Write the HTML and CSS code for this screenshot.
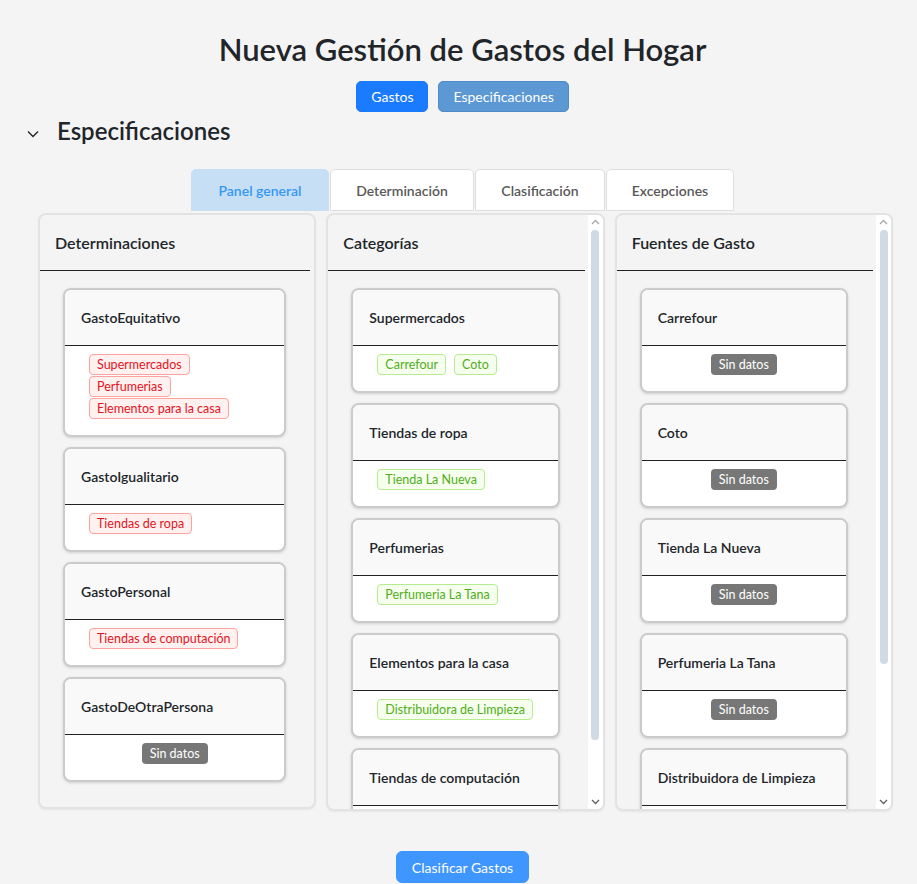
FILE: index.html
```html
<!DOCTYPE html>
<html lang="es">
<head>
<meta charset="utf-8">
<title>Nueva Gestión de Gastos del Hogar</title>
<link rel="stylesheet" href="styles.css">
</head>
<body>
<main class="app">
  <h1 class="title">Nueva Gestión de Gastos del Hogar</h1>
  <nav class="top-nav">
    <button class="btn btn-primary">Gastos</button>
    <button class="btn btn-active">Especificaciones</button>
  </nav>
  <div class="section-head">
    <svg class="chevron" width="14" height="14" viewBox="0 0 14 14"><path d="M2 4.5 L7 9.5 L12 4.5" fill="none" stroke="#222" stroke-width="1.3"/></svg>
    <h2 class="section-title">Especificaciones</h2>
  </div>
  <div class="tabs">
    <div class="tab tab-active">Panel general</div>
    <div class="tab">Determinación</div>
    <div class="tab">Clasificación</div>
    <div class="tab">Excepciones</div>
  </div>
  <div class="panels">
    <section class="panel">
      <div class="panel-content">
        <div class="panel-head">Determinaciones</div>
        <div class="cards">
          <div class="card">
            <div class="card-head">GastoEquitativo</div>
            <div class="card-body">
              <span class="tag tag-red">Supermercados</span>
              <span class="tag tag-red">Perfumerias</span>
              <span class="tag tag-red">Elementos para la casa</span>
            </div>
          </div>
          <div class="card">
            <div class="card-head">GastoIgualitario</div>
            <div class="card-body"><span class="tag tag-red">Tiendas de ropa</span></div>
          </div>
          <div class="card">
            <div class="card-head">GastoPersonal</div>
            <div class="card-body"><span class="tag tag-red">Tiendas de computación</span></div>
          </div>
          <div class="card">
            <div class="card-head">GastoDeOtraPersona</div>
            <div class="card-body card-body-center"><span class="tag tag-empty">Sin datos</span></div>
          </div>
        </div>
      </div>
    </section>
    <section class="panel panel-scroll">
      <div class="panel-content">
        <div class="panel-head">Categorías</div>
        <div class="cards">
          <div class="card">
            <div class="card-head">Supermercados</div>
            <div class="card-body"><span class="tag tag-green">Carrefour</span><span class="tag tag-green">Coto</span></div>
          </div>
          <div class="card">
            <div class="card-head">Tiendas de ropa</div>
            <div class="card-body"><span class="tag tag-green">Tienda La Nueva</span></div>
          </div>
          <div class="card">
            <div class="card-head">Perfumerias</div>
            <div class="card-body"><span class="tag tag-green">Perfumeria La Tana</span></div>
          </div>
          <div class="card">
            <div class="card-head">Elementos para la casa</div>
            <div class="card-body"><span class="tag tag-green">Distribuidora de Limpieza</span></div>
          </div>
          <div class="card">
            <div class="card-head">Tiendas de computación</div>
            <div class="card-body card-body-center"><span class="tag tag-empty">Sin datos</span></div>
          </div>
        </div>
      </div>
      <div class="scrollbar" aria-hidden="true">
        <svg class="sb-arrow" width="15" height="15" viewBox="0 0 15 15"><path d="M4 9 L7.5 5.5 L11 9" fill="none" stroke="#a8a8a8" stroke-width="1.3"/></svg>
        <div class="sb-track"><div class="sb-thumb"></div></div>
        <svg class="sb-arrow" width="15" height="15" viewBox="0 0 15 15"><path d="M4 6 L7.5 9.5 L11 6" fill="none" stroke="#606060" stroke-width="1.3"/></svg>
      </div>
    </section>
    <section class="panel panel-scroll">
      <div class="panel-content">
        <div class="panel-head">Fuentes de Gasto</div>
        <div class="cards">
          <div class="card">
            <div class="card-head">Carrefour</div>
            <div class="card-body card-body-center"><span class="tag tag-empty">Sin datos</span></div>
          </div>
          <div class="card">
            <div class="card-head">Coto</div>
            <div class="card-body card-body-center"><span class="tag tag-empty">Sin datos</span></div>
          </div>
          <div class="card">
            <div class="card-head">Tienda La Nueva</div>
            <div class="card-body card-body-center"><span class="tag tag-empty">Sin datos</span></div>
          </div>
          <div class="card">
            <div class="card-head">Perfumeria La Tana</div>
            <div class="card-body card-body-center"><span class="tag tag-empty">Sin datos</span></div>
          </div>
          <div class="card">
            <div class="card-head">Distribuidora de Limpieza</div>
            <div class="card-body card-body-center"><span class="tag tag-empty">Sin datos</span></div>
          </div>
        </div>
      </div>
      <div class="scrollbar" aria-hidden="true">
        <svg class="sb-arrow" width="15" height="15" viewBox="0 0 15 15"><path d="M4 9 L7.5 5.5 L11 9" fill="none" stroke="#a8a8a8" stroke-width="1.3"/></svg>
        <div class="sb-track"><div class="sb-thumb sb-thumb-short"></div></div>
        <svg class="sb-arrow" width="15" height="15" viewBox="0 0 15 15"><path d="M4 6 L7.5 9.5 L11 6" fill="none" stroke="#606060" stroke-width="1.3"/></svg>
      </div>
    </section>
  </div>
  <div class="footer">
    <button class="btn btn-classify">Clasificar Gastos</button>
  </div>
</main>
</body>
</html>
```
FILE: styles.css
```css
* { box-sizing: border-box; }
html, body { margin: 0; padding: 0; }
body {
  background: #f4f4f4;
  color: #212529;
  font-family: Lato, "Noto Sans", "Liberation Sans", sans-serif;
}
.app {
  padding: 30px 16px 40px 24px;
}
.title {
  margin: 0;
  text-align: center;
  font-size: 31px;
  line-height: 38px;
  font-weight: 600;
  color: #212529;
}
.top-nav {
  display: flex;
  justify-content: center;
  gap: 10px;
  margin-top: 13px;
}
.btn {
  font-family: inherit;
  font-size: 14px;
  height: 31px;
  padding: 0 14px;
  border-radius: 5px;
  color: #fff;
  border: 1px solid transparent;
  cursor: pointer;
}
.btn-primary { background: #1a7bff; border-color: #1a7bff; }
.btn-active { background: #5b98d4; border-color: #4f8cc8; }
.section-head {
  display: flex;
  align-items: center;
  margin-top: 4px;
  height: 30px;
}
.chevron { margin-left: 2px; margin-top: 6px; }
.section-title {
  margin: 0 0 0 17px;
  font-size: 24px;
  font-weight: 600;
  line-height: 30px;
}
.tabs {
  display: flex;
  justify-content: center;
  gap: 1px;
  margin-top: 23px;
}
.tab {
  height: 42px;
  display: flex;
  align-items: center;
  justify-content: center;
  background: #fff;
  border: 1px solid #dedede;
  border-radius: 5px 5px 0 0;
  font-size: 14px;
  font-weight: 600;
  color: #595959;
}
.tab:nth-child(1) { width: 138px; }
.tab:nth-child(2) { width: 144px; }
.tab:nth-child(3) { width: 130px; }
.tab:nth-child(4) { width: 128px; }
.tab-active {
  background: #c6dff5;
  border-color: #c6dff5;
  color: #3597f4;
}
.panels {
  display: grid;
  grid-template-columns: 1fr 1fr 1fr;
  gap: 10px;
  align-items: start;
  margin: 2px 8px 0 14px;
}
.panel {
  display: flex;
  background: #f4f4f4;
  border: 2px solid #e3e3e3;
  border-radius: 8px;
  overflow: hidden;
  box-shadow: 0 1px 2px rgba(0,0,0,0.06);
}
.panel-scroll { height: 598px; }
.panel-content {
  flex: 1;
  min-width: 0;
  overflow: hidden;
}
.panel-head {
  height: 56px;
  display: flex;
  align-items: center;
  padding: 0 15px;
  margin-right: 4px;
  border-bottom: 1px solid #222;
  font-size: 16px;
  font-weight: 600;
  color: #212529;
}
.panel-scroll .panel-head { margin-right: 3px; }
.scrollbar {
  width: 15px;
  flex: none;
  display: flex;
  flex-direction: column;
  background: #fff;
}
.sb-arrow { display: block; flex: none; }
.sb-track {
  flex: 1;
  display: flex;
  justify-content: center;
}
.sb-thumb {
  width: 8px;
  height: 510px;
  background: #cfdae5;
  border-radius: 4px;
}
.sb-thumb-short { height: 434px; }
.cards {
  display: flex;
  flex-direction: column;
  gap: 10px;
  padding: 17px 28px 25px 23px;
}
.card {
  flex: none;
  background: #fff;
  border: 2px solid #cbcbcb;
  border-radius: 8px;
  box-shadow: 0 1px 3px rgba(0,0,0,0.15);
  overflow: hidden;
}
.card-head {
  height: 56px;
  display: flex;
  align-items: center;
  padding: 0 16px;
  background: #f9f9f9;
  border-bottom: 1px solid #222;
  font-size: 14px;
  font-weight: 600;
  color: #212529;
}
.card-body {
  display: flex;
  flex-wrap: wrap;
  gap: 1px 8px;
  padding: 8px 24px 16px;
}
.card-body-center { justify-content: center; }
.tag {
  display: inline-flex;
  align-items: center;
  height: 21px;
  padding: 0 7px;
  font-size: 12.5px;
  border-radius: 4px;
  border: 1px solid transparent;
  white-space: nowrap;
}
.tag-red { background: #fff1f0; border-color: #ffa39e; color: #e5131d; }
.tag-green { background: #f6ffed; border-color: #b7eb8f; color: #4fae1a; }
.tag-empty { background: #777; color: #fff; height: 21px; border-radius: 4px; }
.footer {
  display: flex;
  justify-content: center;
  margin-top: 40px;
}
.btn-classify { background: #4096ff; border-color: #4096ff; height: 32px; padding: 0 15px; border-radius: 6px; }
```
